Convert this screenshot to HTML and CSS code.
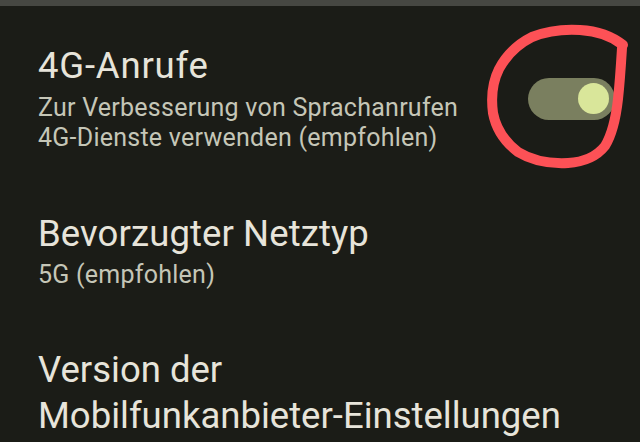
FILE: index.html
```html
<!DOCTYPE html>
<html lang="de">
<head>
<meta charset="utf-8">
<title>Einstellungen</title>
<link rel="stylesheet" href="styles.css">
</head>
<body>
<div class="screen">
  <div class="topbar"></div>
  <div class="list">
    <div class="item item-toggle">
      <div class="text">
        <div class="title title-wide">4G-Anrufe</div>
        <div class="summary">Zur Verbesserung von Sprachanrufen<br>4G-Dienste verwenden (empfohlen)</div>
      </div>
      <div class="switch"><div class="thumb"></div></div>
    </div>
    <div class="item item-second">
      <div class="text">
        <div class="title">Bevorzugter Netztyp</div>
        <div class="summary">5G (empfohlen)</div>
      </div>
    </div>
    <div class="item item-third">
      <div class="text">
        <div class="title title-multi">Version der<br>Mobilfunkanbieter-Einstellungen</div>
      </div>
    </div>
  </div>
  <svg class="scribble" width="640" height="442" viewBox="0 0 640 442">
    <path d="M623 45 C613 37 597 31 580 30 C564 29 547 31 532 37 C518 44 506 56 499 69 C492 83 491 98 493 113 C496 129 505 142 518 152 C531 160 549 164 568 163 C584 162 597 156 605 146 C613 133 616 117 618 99 C620 81 621 64 622 48"
      fill="none" stroke="#fd5156" stroke-width="10" stroke-linecap="round" stroke-linejoin="round"/>
  </svg>
</div>
</body>
</html>
```
FILE: styles.css
```css
html, body {
  margin: 0;
  padding: 0;
  background: #1b1c17;
}
.screen {
  position: relative;
  width: 640px;
  height: 442px;
  overflow: hidden;
  background: #1b1c17;
  font-family: Roboto, "Noto Sans", sans-serif;
}
.topbar {
  height: 6px;
  background: #464742;
}
.list {
  display: flex;
  flex-direction: column;
  padding: 38px 25px 0 38px;
}
.item {
  display: flex;
  align-items: center;
  justify-content: space-between;
}
.item-second {
  margin-top: 59px;
}
.item-third {
  margin-top: 57px;
}
.title {
  color: #e7e4da;
  font-size: 36.5px;
  line-height: 44px;
  letter-spacing: 0.1px;
}
.title-wide {
  letter-spacing: 0.8px;
}
.title-multi {
  line-height: 46px;
  letter-spacing: 0;
}
.summary {
  color: #c5c6b7;
  font-size: 25px;
  line-height: 30px;
  margin-top: 5px;
  letter-spacing: 0.25px;
}
.item-second .summary {
  margin-top: 4px;
}
.switch {
  width: 87px;
  height: 42px;
  border-radius: 21px;
  background: #7a7f5f;
  display: flex;
  align-items: center;
  justify-content: flex-end;
  padding-right: 6px;
  box-sizing: border-box;
}
.thumb {
  width: 31px;
  height: 31px;
  border-radius: 50%;
  background: #d9e69a;
}
.scribble {
  position: absolute;
  left: 0;
  top: 0;
  pointer-events: none;
}
```
